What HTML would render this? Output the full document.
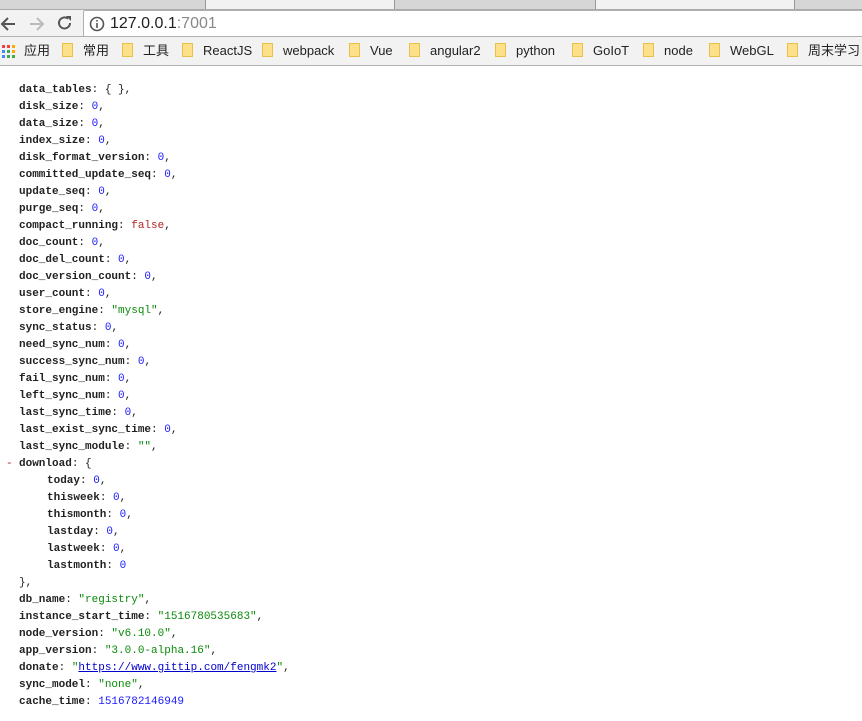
<!DOCTYPE html>
<html><head><meta charset="utf-8"><style>
*{margin:0;padding:0;box-sizing:border-box}
body{width:862px;height:721px;overflow:hidden;background:#fff;font-family:"Liberation Sans","Noto Sans CJK SC",sans-serif;position:relative}
#tabs{position:absolute;left:0;top:0;width:862px;height:10px;background:#d6d6d6}
#tabs .t{position:absolute;top:0;left:205px;width:190px;height:10px;background:#f2f2f2;border:1px solid #999;border-top:none}
#tabs .t2{position:absolute;top:0;left:595px;width:200px;height:10px;background:#f2f2f2;border-left:1px solid #999;border-right:1px solid #999}
#bar{position:absolute;left:0;top:9px;width:862px;height:28px;background:#f2f2f2;border-top:1px solid #aaa}
#addr{position:absolute;left:83px;top:0px;width:790px;height:27px;background:#fff;border:1px solid #b0b0b0;border-radius:2px;font-size:16px;line-height:25px;padding-left:26px;color:#222}
#addr span{color:#888}
#bm{position:absolute;left:0;top:36px;width:862px;height:30px;background:#f2f2f2;border-top:1px solid #b0b0b0;border-bottom:1px solid #b0b0b0;font-size:13px;color:#222}
.b{position:absolute;top:6px;line-height:16px;white-space:nowrap}
.f{display:inline-block;width:11px;height:14px;background:#fde08a;border:1px solid #e8c04a;vertical-align:-2px;margin-right:10px}
#c{position:absolute;left:19px;top:82px;font-family:"Liberation Mono",monospace;font-size:11px;line-height:17px;color:#222;white-space:pre}
b{font-weight:bold;color:#222}
.n{color:#1a1aff}.s{color:#0a8a0a}.r{color:#b22222}
.i{padding-left:28px}
a{color:#00c;text-decoration:underline}
</style></head><body>
<div id="tabs"><div class="t"></div><div class="t2"></div></div>
<div id="bar">
<svg style="position:absolute;left:0;top:5px" width="20" height="18"><path d="M15 9H3M8 3L2 9l6 6" stroke="#555" stroke-width="2" fill="none"/></svg>
<svg style="position:absolute;left:27px;top:5px" width="20" height="18"><path d="M3 9h12M10 3l6 6-6 6" stroke="#bbb" stroke-width="2" fill="none"/></svg>
<svg style="position:absolute;left:56px;top:4px" width="18" height="18"><path d="M14 9a5.5 5.5 0 1 1-2-4.3" stroke="#555" stroke-width="2" fill="none"/><path d="M10 2h5v5z" fill="#555"/></svg>
<div id="addr"><svg style="position:absolute;left:5px;top:5px" width="16" height="16"><circle cx="8" cy="8" r="6.5" stroke="#555" stroke-width="1.6" fill="none"/><rect x="7.2" y="7" width="1.6" height="5" fill="#555"/><rect x="7.2" y="4" width="1.6" height="1.6" fill="#555"/></svg>127.0.0.1<span>:7001</span></div>
</div>
<div id="bm">
<svg style="position:absolute;left:2px;top:8px" width="14" height="14"><g><rect x="0" y="0" width="3" height="3" fill="#e44"/><rect x="5" y="0" width="3" height="3" fill="#e44"/><rect x="10" y="0" width="3" height="3" fill="#fa0"/><rect x="0" y="5" width="3" height="3" fill="#48f"/><rect x="5" y="5" width="3" height="3" fill="#4a4"/><rect x="10" y="5" width="3" height="3" fill="#fa0"/><rect x="0" y="10" width="3" height="3" fill="#48f"/><rect x="5" y="10" width="3" height="3" fill="#4a4"/><rect x="10" y="10" width="3" height="3" fill="#4a4"/></g></svg>
<div class="b" style="left:24px">应用</div>
<div class="b" style="left:62px"><i class="f"></i>常用</div>
<div class="b" style="left:122px"><i class="f"></i>工具</div>
<div class="b" style="left:182px"><i class="f"></i>ReactJS</div>
<div class="b" style="left:262px"><i class="f"></i>webpack</div>
<div class="b" style="left:349px"><i class="f"></i>Vue</div>
<div class="b" style="left:409px"><i class="f"></i>angular2</div>
<div class="b" style="left:495px"><i class="f"></i>python</div>
<div class="b" style="left:572px"><i class="f"></i>GoIoT</div>
<div class="b" style="left:643px"><i class="f"></i>node</div>
<div class="b" style="left:709px"><i class="f"></i>WebGL</div>
<div class="b" style="left:787px"><i class="f"></i>周末学习</div>
</div>
<div id="c"><div><b>data_tables</b>: { },</div><div><b>disk_size</b>: <span class="n">0</span>,</div><div><b>data_size</b>: <span class="n">0</span>,</div><div><b>index_size</b>: <span class="n">0</span>,</div><div><b>disk_format_version</b>: <span class="n">0</span>,</div><div><b>committed_update_seq</b>: <span class="n">0</span>,</div><div><b>update_seq</b>: <span class="n">0</span>,</div><div><b>purge_seq</b>: <span class="n">0</span>,</div><div><b>compact_running</b>: <span class="r">false</span>,</div><div><b>doc_count</b>: <span class="n">0</span>,</div><div><b>doc_del_count</b>: <span class="n">0</span>,</div><div><b>doc_version_count</b>: <span class="n">0</span>,</div><div><b>user_count</b>: <span class="n">0</span>,</div><div><b>store_engine</b>: <span class="s">"mysql"</span>,</div><div><b>sync_status</b>: <span class="n">0</span>,</div><div><b>need_sync_num</b>: <span class="n">0</span>,</div><div><b>success_sync_num</b>: <span class="n">0</span>,</div><div><b>fail_sync_num</b>: <span class="n">0</span>,</div><div><b>left_sync_num</b>: <span class="n">0</span>,</div><div><b>last_sync_time</b>: <span class="n">0</span>,</div><div><b>last_exist_sync_time</b>: <span class="n">0</span>,</div><div><b>last_sync_module</b>: <span class="s">""</span>,</div><div style="position:relative"><span class="r" style="position:absolute;left:-13px">-</span><b>download</b>: {</div><div class="i"><b>today</b>: <span class="n">0</span>,</div><div class="i"><b>thisweek</b>: <span class="n">0</span>,</div><div class="i"><b>thismonth</b>: <span class="n">0</span>,</div><div class="i"><b>lastday</b>: <span class="n">0</span>,</div><div class="i"><b>lastweek</b>: <span class="n">0</span>,</div><div class="i"><b>lastmonth</b>: <span class="n">0</span></div><div>},</div><div><b>db_name</b>: <span class="s">"registry"</span>,</div><div><b>instance_start_time</b>: <span class="s">"1516780535683"</span>,</div><div><b>node_version</b>: <span class="s">"v6.10.0"</span>,</div><div><b>app_version</b>: <span class="s">"3.0.0-alpha.16"</span>,</div><div><b>donate</b>: <span class="s">"<a>https://www.gittip.com/fengmk2</a>"</span>,</div><div><b>sync_model</b>: <span class="s">"none"</span>,</div><div><b>cache_time</b>: <span class="n">1516782146949</span></div></div>
</body></html>
